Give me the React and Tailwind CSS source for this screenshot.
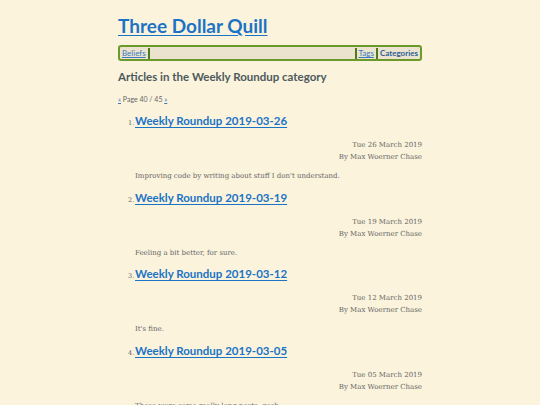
const posts = [
  { n: 1, title: 'Weekly Roundup 2019-03-26', date: 'Tue 26 March 2019', summary: "Improving code by writing about stuff I don't understand." },
  { n: 2, title: 'Weekly Roundup 2019-03-19', date: 'Tue 19 March 2019', summary: 'Feeling a bit better, for sure.' },
  { n: 3, title: 'Weekly Roundup 2019-03-12', date: 'Tue 12 March 2019', summary: "It's fine." },
  { n: 4, title: 'Weekly Roundup 2019-03-05', date: 'Tue 05 March 2019', summary: 'These were some really long posts, gosh.' },
]

const sans = { fontFamily: 'Lato, "Open Sans", sans-serif' }
const serif = { fontFamily: '"DejaVu Serif", "Liberation Serif", serif' }

export default function App() {
  return (
    <div className="min-h-[405px] w-[540px] overflow-hidden bg-[#fbf3dc] text-[#555]">
      <div className="mx-auto w-[304px] pt-[14px]" style={sans}>
        <h1 className="text-[19px] font-bold leading-[24px] text-[#1b73c6] underline underline-offset-2">
          Three Dollar Quill
        </h1>

        <nav className="mt-[7px] flex h-[16px] items-center rounded-[3px] border-2 border-[#6b9a2b] bg-[#ebe3cd] px-[2px] text-[8px] leading-none">
          <a className="text-[#3a7bbf] underline">Beliefs</a>
          <span className="ml-[2px] h-[11px] w-[2px] bg-[#4d7a1c]" />
          <span className="flex-1" />
          <span className="h-[11px] w-[2px] bg-[#4d7a1c]" />
          <a className="mx-[2px] text-[#3a7bbf] underline">Tags</a>
          <span className="mr-[2px] h-[11px] w-[2px] bg-[#4d7a1c]" />
          <span className="font-bold text-[#2a5f96]">Categories</span>
        </nav>

        <h2 className="mt-[7px] text-[11.5px] font-bold leading-[18px] text-[#4d5a5c]">
          Articles in the Weekly Roundup category
        </h2>

        <div className="mt-[8px] text-[7px] leading-[10px] text-[#666]">
          <a className="text-[#3a7bbf] underline">«</a> Page 40 / 45{' '}
          <a className="text-[#3a7bbf] underline">»</a>
        </div>

        <ol className="mt-[7px]">
          {posts.map((p) => (
            <li key={p.n} className="h-[76.5px]">
              <div className="flex items-baseline">
                <span className="w-[17px] pl-[10px] text-[6.5px] text-[#666]" style={serif}>
                  {p.n}.
                </span>
                <a className="text-[11.5px] font-bold leading-[20px] text-[#1b73c6] underline underline-offset-2">
                  {p.title}
                </a>
              </div>
              <div className="mt-[8px] text-right text-[7px] leading-[12px] text-[#666]" style={serif}>
                <div>{p.date}</div>
                <div>By Max Woerner Chase</div>
              </div>
              <p className="mt-[8px] pl-[17px] text-[7px] leading-[10px] text-[#666]" style={serif}>
                {p.summary}
              </p>
            </li>
          ))}
        </ol>
      </div>
    </div>
  )
}
